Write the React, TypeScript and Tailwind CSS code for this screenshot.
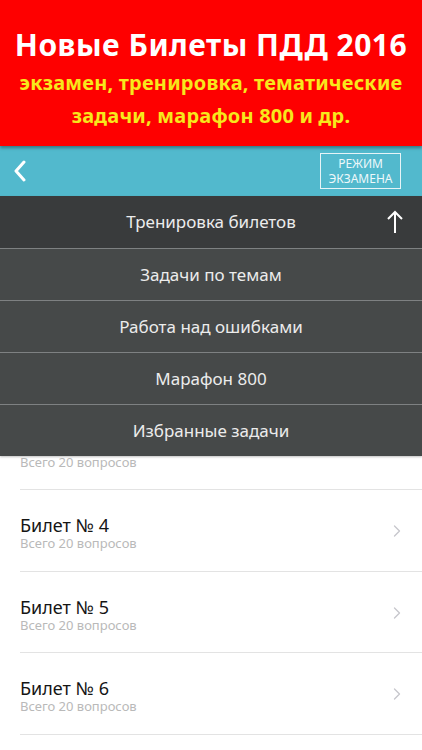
import { ChevronRight } from 'lucide-react';

const menuItems = [
  'Тренировка билетов',
  'Задачи по темам',
  'Работа над ошибками',
  'Марафон 800',
  'Избранные задачи',
];

const tickets = [1, 2, 3, 4, 5, 6];

export default function App() {
  return (
    <div
      className="w-[422px] h-[750px] overflow-hidden bg-white flex flex-col"
      style={{ fontFamily: '"Noto Sans", "Open Sans", sans-serif' }}
    >
      {/* promo banner */}
      <div className="relative z-10 h-[146px] shrink-0 bg-[#fe0000] flex flex-col items-center pt-[27px] shadow-[0_2px_3px_rgba(0,0,0,0.35)]">
        <div className="text-white font-bold text-[30px] leading-[36px] tracking-[0.5px]">
          Новые Билеты ПДД 2016
        </div>
        <div className="mt-[3px] text-[#f7e81c] font-bold text-[20px] leading-[33px] text-center tracking-[0.2px]">
          экзамен, тренировка, тематические
          <br />
          задачи, марафон 800 и др.
        </div>
      </div>

      {/* nav bar */}
      <div className="h-[50px] shrink-0 bg-[#52b9cd] flex items-center justify-between pl-[13px] pr-[21px]">
        <svg width="14" height="22" viewBox="0 0 14 22" fill="none">
          <polyline
            points="11,2 3,11 11,20"
            stroke="white"
            strokeWidth="3"
            strokeLinecap="round"
            strokeLinejoin="round"
          />
        </svg>
        <button className="w-[81px] h-[36px] border border-[#e6f4f7] flex flex-col items-center justify-center text-[#eef8fa] text-[12px] leading-[15px]">
          <span>РЕЖИМ</span>
          <span>ЭКЗАМЕНА</span>
        </button>
      </div>

      {/* content */}
      <div className="relative flex-1">
        <div className="pt-[49.5px]">
          {tickets.map((n) => (
            <div key={n} className="pl-5">
              <div className="h-[81.5px] border-b border-[#e3e3e3] flex items-start justify-between pr-[15px]">
                <div className="pt-[25px]">
                  <div className="text-[18px] leading-[20px] text-[#151515]">Билет № {n}</div>
                  <div className="text-[13px] leading-[16px] text-[#b9b9b9]">Всего 20 вопросов</div>
                </div>
                <ChevronRight className="mt-[31px] text-[#c7c7cc]" size={20} strokeWidth={1.6} />
              </div>
            </div>
          ))}
        </div>

        {/* dropdown menu */}
        <div className="absolute top-0 left-0 right-0 shadow-[0_1px_2px_rgba(0,0,0,0.25)]">
          {menuItems.map((label, i) => (
            <div
              key={label}
              className={`relative h-[52px] flex items-center justify-center text-[17px] text-[#ececec] ${
                i === 0 ? 'bg-[#393b3c]' : 'bg-[#464949] border-t border-[#7e8182]'
              }`}
            >
              {label}
              {i === 0 && (
                <svg
                  className="absolute right-[18px] top-[14px]"
                  width="18"
                  height="24"
                  viewBox="0 0 18 24"
                  fill="none"
                >
                  <path d="M9 23V2M2 9l7-7 7 7" stroke="white" strokeWidth="2" />
                </svg>
              )}
            </div>
          ))}
        </div>
      </div>
    </div>
  );
}
